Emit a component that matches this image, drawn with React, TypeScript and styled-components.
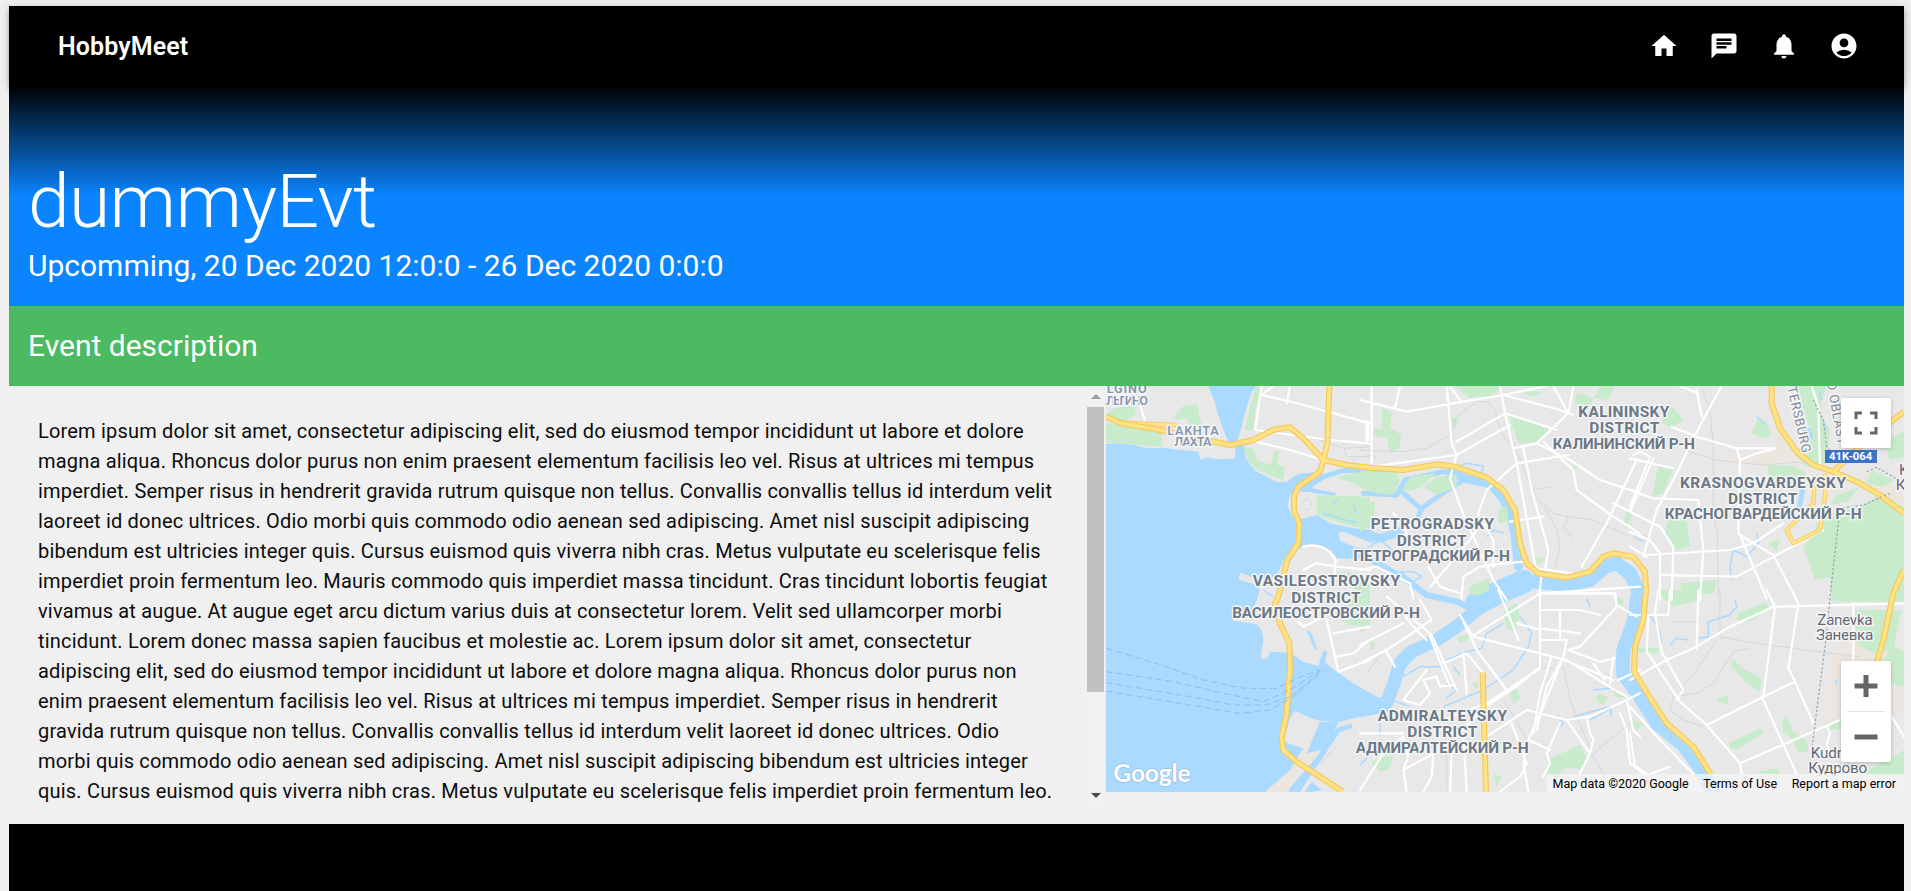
import React from 'react';
import styled, { createGlobalStyle } from 'styled-components';
import { MdHome, MdChat, MdNotifications, MdAccountCircle } from 'react-icons/md';

const GlobalStyle = createGlobalStyle`
  *, *::before, *::after { box-sizing: border-box; }
  body {
    margin: 0;
    background: #f0f0f0;
    font-family: Roboto, 'Liberation Sans', sans-serif;
    -webkit-font-smoothing: antialiased;
  }
`;

const Page = styled.div`
  height: 891px;
  padding: 6px 7px 0 9px;
  display: flex;
  flex-direction: column;
  overflow: hidden;
`;

const TopBar = styled.header`
  position: relative;
  z-index: 1;
  flex: none;
  height: 80px;
  padding: 0 45px 0 49px;
  display: flex;
  align-items: center;
  justify-content: space-between;
  background: #000;
  color: #fff;
  box-shadow: 0 2px 5px -1px rgba(0, 0, 0, 0.2), 0 5px 6px rgba(0, 0, 0, 0.14),
    0 1px 12px rgba(0, 0, 0, 0.12);
`;

const Brand = styled.div`
  font-size: 25px;
  font-weight: 600;
  letter-spacing: 0.1px;
`;

const Nav = styled.nav`
  display: flex;
  gap: 30px;
  font-size: 30px;
  svg { display: block; }
`;

const Hero = styled.section`
  position: relative;
  z-index: 2;
  flex: none;
  height: 220px;
  padding: 78px 19px 0;
  background: linear-gradient(#000, #0a84ff 110px);
  color: #fff;
`;

const Title = styled.h1`
  margin: 0;
  font-size: 75px;
  line-height: 75px;
  font-weight: 300;
  letter-spacing: -0.625px;
`;

const Schedule = styled.div`
  margin-top: 7px;
  font-size: 30px;
  line-height: 40px;
`;

const SectionBar = styled.section`
  flex: none;
  height: 80px;
  padding: 0 19px 2px;
  display: flex;
  align-items: center;
  background: #4cba61;
  color: #fff;
  font-size: 30px;
`;

const Content = styled.main`
  flex: none;
  height: 438px;
  display: flex;
  align-items: flex-start;
`;

const Description = styled.div`
  width: 1095px;
  height: 422px;
  display: flex;
  overflow: hidden;
`;

const Lines = styled.div`
  flex: 1;
  min-width: 0;
  padding: 30px 0 0 29px;
  font-size: 20px;
  line-height: 30px;
  letter-spacing: 0.185px;
  color: #0c0c0c;
`;

const Line = styled.div`
  white-space: nowrap;
`;

const ScrollTrack = styled.div`
  flex: none;
  width: 17px;
  display: flex;
  flex-direction: column;
  align-items: center;
  background: #f1f1f1;
`;

const Arrow = styled.div<{ $down?: boolean }>`
  height: 21px;
  flex: none;
  display: flex;
  align-items: center;
  &::before {
    content: '';
    border-style: solid;
    border-width: ${(p) => (p.$down ? '5px 5px 0' : '0 5px 5px')};
    border-color: ${(p) => (p.$down ? '#4c4c4c transparent' : 'transparent transparent #a0a0a0')};
  }
`;

const Thumb = styled.div`
  flex: none;
  width: 17px;
  height: 285px;
  background: #c1c1c1;
`;

const TrackSpace = styled.div`
  flex: none;
  height: 93px;
`;

const MapPanel = styled.div`
  position: relative;
  margin-left: 2px;
  flex: 1;
  height: 406px;
  overflow: hidden;
  background: #e8e8e8;
`;

const MapDrawing = styled.svg`
  display: block;
  width: 100%;
  height: 100%;
`;

const MapButton = styled.div`
  position: absolute;
  top: 12px;
  right: 13px;
  width: 50px;
  height: 50px;
  display: grid;
  place-items: center;
  background: #fff;
  border-radius: 2px;
  box-shadow: 0 1px 5px -1px rgba(0, 0, 0, 0.35);
`;

const ZoomControl = styled.div`
  position: absolute;
  top: 275px;
  right: 13px;
  width: 50px;
  height: 101px;
  display: flex;
  flex-direction: column;
  align-items: center;
  background: #fff;
  border-radius: 2px;
  box-shadow: 0 1px 5px -1px rgba(0, 0, 0, 0.35);
`;

const ZoomStep = styled.div`
  height: 50px;
  display: grid;
  place-items: center;
`;

const Divider = styled.div`
  width: 38px;
  height: 1px;
  background: #e2e2e2;
`;

const Attribution = styled.div`
  position: absolute;
  right: 0;
  bottom: 0;
  height: 18px;
  padding: 1px 8px 0 6px;
  display: flex;
  align-items: center;
  gap: 14.5px;
  background: rgba(245, 245, 245, 0.72);
  font-size: 12.5px;
  line-height: 18px;
  color: #000;
  white-space: nowrap;
`;

const Footer = styled.footer`
  flex: 1;
  background: #000;
`;

const TEXT = [
  'Lorem ipsum dolor sit amet, consectetur adipiscing elit, sed do eiusmod tempor incididunt ut labore et dolore',
  'magna aliqua. Rhoncus dolor purus non enim praesent elementum facilisis leo vel. Risus at ultrices mi tempus',
  'imperdiet. Semper risus in hendrerit gravida rutrum quisque non tellus. Convallis convallis tellus id interdum velit',
  'laoreet id donec ultrices. Odio morbi quis commodo odio aenean sed adipiscing. Amet nisl suscipit adipiscing',
  'bibendum est ultricies integer quis. Cursus euismod quis viverra nibh cras. Metus vulputate eu scelerisque felis',
  'imperdiet proin fermentum leo. Mauris commodo quis imperdiet massa tincidunt. Cras tincidunt lobortis feugiat',
  'vivamus at augue. At augue eget arcu dictum varius duis at consectetur lorem. Velit sed ullamcorper morbi',
  'tincidunt. Lorem donec massa sapien faucibus et molestie ac. Lorem ipsum dolor sit amet, consectetur',
  'adipiscing elit, sed do eiusmod tempor incididunt ut labore et dolore magna aliqua. Rhoncus dolor purus non',
  'enim praesent elementum facilisis leo vel. Risus at ultrices mi tempus imperdiet. Semper risus in hendrerit',
  'gravida rutrum quisque non tellus. Convallis convallis tellus id interdum velit laoreet id donec ultrices. Odio',
  'morbi quis commodo odio aenean sed adipiscing. Amet nisl suscipit adipiscing bibendum est ultricies integer',
  'quis. Cursus euismod quis viverra nibh cras. Metus vulputate eu scelerisque felis imperdiet proin fermentum leo.',
];

/* The map is split in six tiles, three across and two down, three units to a pixel. */
const ORIGINS = [[0, 0], [810, 0], [1620, 0], [0, 630], [810, 630], [1620, 630]];

const Tiles = ({ paths }: { paths: string[] }) => (
  <>
    {paths.map((d, i) => (
      <path key={i} d={d} transform={`translate(${ORIGINS[i][0]} ${ORIGINS[i][1]})`} />
    ))}
  </>
);

const BAY =
  'M48 192L95 190 130 195 172 205 215 203 270 210 325 215 333 240 350 232 380 237 434 236 437 200 415 185 400 150 383 100 372 60 355 18H500L485 35 465 100 452 150 442 180 444 194 460 196 468 235 495 272 560 306 588 306 625 282 690 275 672 300 640 330 600 345 593 380 607 408 632 418 680 405 720 430 790 445 850 450V490L760 455 745 458 750 482 790 500 850 510V540L740 535 725 512 690 498 640 498 620 510 590 525 572 560 560 590 510 600 450 578 445 598 490 612 510 628 500 660 485 705 425 700 430 722 500 733 515 750 520 780 512 834 530 838 540 815 600 818 640 845 685 858 700 812 712 815 705 845 725 865 790 910 860 950 895 955V995L845 1006 790 1014 750 1026 690 1022 665 1015 615 992 600 1015 580 1085 640 1105 600 1170 525 1236H48Z';

const PARKS = [
  'M48 100L75 85 140 75 135 105 110 122 70 122 48 112ZM48 130L150 140 215 160 218 200 130 194 48 188ZM250 110L280 78 320 72 330 120 345 150 300 135 290 110 265 122ZM498 18L515 22 495 90 490 150 465 150 480 80ZM460 200L490 205 500 240 545 255 550 215 568 210 562 255 585 260 580 300 500 270 475 240ZM680 345L840 350V445L790 440 680 405ZM735 292L790 280 840 268V335L790 308ZM730 575L800 580 840 600V660H820L780 610Z',
  'M285 18H425L400 45 330 55ZM65 80L95 100 92 145 125 165 118 205 90 218 80 175 38 165 45 145 65 150ZM445 105L570 145 530 185 475 190ZM10 275L110 275 120 300 100 345 50 340 0 320V290ZM150 290L225 280 180 325 125 335ZM230 290L290 285 290 320 230 345 190 320ZM0 370L45 365 40 430 0 455ZM415 385L440 380 445 425 415 430ZM325 620L390 595 385 635 335 645ZM275 110L300 120 280 150ZM520 530L555 535 540 555 520 545ZM650 38L700 55 690 80 645 70ZM725 18H762L745 60 700 55ZM625 260L655 255 640 280ZM800 395L820 400 800 445 790 430ZM480 35L550 35 520 50Z',
  'M115 65L160 120 120 145 95 125ZM385 110L410 130 425 165 400 175 365 160ZM85 260L130 265 100 340 65 350ZM115 420L170 420 180 500 130 510 105 450ZM490 18H590L565 90 600 150 590 250 530 260 490 220 550 170 520 90ZM415 255L495 258 530 285 525 330 415 285ZM520 500L600 400 690 380 740 350 822 380V660H605L600 590 555 600ZM725 270L790 300 760 320 710 310ZM620 345L690 320 650 365 600 375ZM560 430L610 425 600 480 540 490ZM415 490L450 475 440 515ZM150 610L260 600 250 640 160 650ZM760 180L822 155V230L780 240Z',
  'M740 80L790 20 840 0V110L780 105Z',
  'M430 60L470 40 480 75 465 125 440 115ZM290 145L330 125 335 140 300 160ZM335 285L350 275 355 298ZM450 310L470 295 480 325 460 345ZM570 505L660 465 680 505 660 540 620 530 590 560 550 555ZM50 505L100 495 90 535 60 545 35 520ZM400 550L425 560 410 590ZM25 155L45 160 40 185ZM710 310L745 320 730 345 710 335ZM770 20L790 30 785 50 770 50ZM325 0H370L360 15 330 12ZM755 285L800 325 765 320ZM0 120L15 110 10 135Z',
  'M85 0L215 0 210 30 130 50 90 15ZM325 70L410 35 415 55 360 95 320 90ZM305 205L345 240 395 265 390 305 350 280 305 230ZM260 325L295 315 295 345 265 335ZM295 460L390 415 400 430 330 475 300 475ZM455 395L470 375 490 425 530 450 535 485 505 490 490 450 460 430ZM610 20L780 -20H822V35H610ZM675 60H815L790 180 730 190 680 160ZM790 170L822 180V290L780 280 760 210ZM15 170L90 175 80 190 20 185ZM0 390L40 400 20 425ZM590 400L640 390 640 415 595 420ZM370 550L440 535 450 552ZM750 520L822 480V552H690Z',
];

const CANALS = [
  'M725 370L745 360M790 375L800 400M700 400L800 430',
  'M290 260L320 250 370 258 365 280 340 275M380 470L400 450 430 460M120 575L160 575 185 590 160 605ZM20 505L60 480 110 520',
  'M380 110L405 130M565 30L575 60M380 460L385 490 350 530 310 510 300 560 305 600M580 130L590 150M10 470L40 485',
  'M652 120L675 175M660 125L680 178M520 0L550 20M600 605L690 500 735 395M615 605L750 415 785 405',
  'M95 330L150 350M130 260L180 230 240 230 260 210 320 185 365 175 380 130 430 100M480 80L515 130 505 170 460 240 370 300 250 350M260 280L290 300 260 325M280 230L300 255M680 25L690 50M700 300L750 295M690 390L760 350M60 350L60 440M0 525L20 505 25 480M590 375L610 400 595 415M640 380L750 350 755 380',
  'M55 70L85 110 95 160M120 165L140 145 175 150M205 145L235 140 235 95 300 75 320 50 315 30M618 270L620 285',
];

const RAILS = [
  'M690 180L760 205 840 200M760 190L770 230 840 230M635 370Q665 340 665 380Q650 400 640 385',
  'M0 210L130 215 200 205 270 165 290 110 350 65 385 65 405 90 420 150 445 190M450 160L500 290 530 350 580 400 625 410 700 420 810 470M530 360L560 390 590 450 600 500 585 560M520 330L580 320M625 410L610 440 640 475M0 230L40 225 50 240',
  'M215 20L240 90 250 200 250 400 262 460 265 650M160 210L260 240 400 255 520 245M0 430L60 480',
  'M690 520L740 470',
  'M610 230L630 330 700 500 760 605M820 390L760 440 690 500M430 330L480 410 500 450M260 480L260 600M20 250L65 190M530 230L600 240',
  'M270 0L270 140 380 160 600 190 690 200M360 175L310 185 250 280 200 310 130 320 120 360 160 390 220 410M260 150L200 240 150 300M125 95L210 95',
];

const ROADS = [
  'M515 45L630 72 840 130M515 18L495 150 720 180 840 190M600 18L590 70M550 18L515 45M830 130V185M485 182L600 210 700 240M150 75L165 120M640 500Q700 485 730 530L740 545M640 570L680 550 740 560 840 570M735 540L735 580',
  'M0 60L140 95 310 65 430 45 560 18M260 18L275 190 290 225 270 295 320 430 340 470 400 600 440 660M35 18L35 250M120 18L105 85M420 18L435 100 470 250 530 580M430 45L600 90 640 105M580 18L625 100 530 190 460 205M640 18L625 100M300 60L270 20M435 100L290 185M450 135L290 225 0 265M435 100L590 150M530 190L630 240 720 300 840 340M490 205L515 330 565 510 555 570M470 250L625 225M470 250L380 330 355 400 345 460 280 540 210 620M550 185L640 270 650 330 760 410 840 460M665 560L740 430 830 240M760 370L840 410M450 425L550 410M305 655L310 590 360 560 440 550 490 545M370 430L400 480 400 560M540 630L545 580M540 640H765V655M0 125H25V180M100 400L130 430 150 500M530 565L640 580M0 570L50 560 150 610 160 655M205 560L240 620 300 640',
  'M275 18L195 165 130 300 80 390 40 530M125 140L200 170 320 205 435 205M320 205L330 240 325 460 370 490M330 240L380 220 430 208M200 30L215 110M150 18L205 40M0 235L130 265M10 225L30 215 60 230 0 380M70 235L0 395M0 330L70 355 205 360 220 510 210 660M0 395L90 440 130 500 125 660M0 455L60 480 90 520 90 660M50 525L300 510 370 490 460 430M370 490L430 525 500 660M330 465L410 655M430 530L580 450M430 530L320 590 95 585M545 18L565 80 570 260M0 500L50 530',
  'M710 90L745 245 840 210M730 130L840 110M740 200L790 190 840 150M625 95L640 110 690 85',
  'M0 220L80 180 215 90 180 30M0 165L130 100M75 180L105 230M130 70L160 110 200 150M80 20L215 135 290 300M210 140L270 290M300 75L340 140 460 170 600 205 760 270M310 95L350 180 440 300M335 140L540 10 840 -10M415 0L460 110 475 150M540 0V230L470 290 360 360 310 420M540 10H765L770 45 830 80M540 60H660L720 75M540 115L660 130M600 60V150M540 150H620L610 200 550 350 500 460 490 520 505 605M470 100L540 120M540 235L380 340 250 390M770 50L660 170 625 180M610 205L660 235 740 285 800 320M625 180L720 215 765 205M700 220L735 270M760 200L750 280M575 200L540 310 520 430M605 210L560 290 530 420M380 440L500 360 620 390 690 380 800 330 840 310M620 390L690 490 660 550M680 385L690 430 700 450 690 490M550 560L570 520 560 490 600 400M505 450L570 480M800 330L820 420 840 440M455 400L500 520 480 560 420 605M780 370L800 420 810 520 840 540M0 600L70 490 130 440M140 605L130 540 220 490 215 560 190 605M270 605L275 490M310 430L320 605M130 440L145 500 130 540M250 220L320 190 370 250M310 190L320 310M190 270L230 260 240 290 280 285 290 300M190 270L210 310 180 345 130 330 200 240M0 430H130M775 270L840 240',
  'M0 270L110 210 200 170 300 110 430 50 822 40M435 50L400 320 230 405M410 0L435 50M485 0L505 40 475 235 495 275 550 400M495 275L400 320M395 320L500 552M205 0L200 175M120 0L115 75 0 75M85 0L75 70 95 185 160 300 140 330M55 75L50 185 150 335 230 405 330 520 335 552M330 520L630 390M670 40V210M590 405L600 430 590 460 600 500M0 350L90 450 190 552M0 430L15 530 40 552M785 380L822 440M20 530L60 560M60 552L120 530',
];

const HIGHWAYS = [
  'M718 18L712 190 695 260 690 275 625 320 612 350 612 390 628 430 625 490 592 540 565 650 555 670 570 730 598 790 600 870 590 1000 575 1070 580 1110 620 1145 760 1236',
  'M48 110L95 130 210 150 320 175 420 195 490 180 550 150 600 142 640 175 700 240 770 255 840 263 940 270 1040 253 1095 260 1190 293 1240 330 1275 390 1290 490 1310 550 1345 580 1430 593 1500 575 1540 530 1570 520 1630 530 1665 575 1668 630 1660 720 1635 800 1632 875 1685 960 1730 1030 1810 1100 1862 1182',
  'M2045 18L2045 70 2070 145 2120 215 2170 255 2230 275 2300 305 2370 345 2442 400',
  'M2442 95L2320 190 2230 275M2442 570L2410 640 2380 780 2360 850M1178 878L1188 1236',
];

const LINKS = 'M2175 285L2170 370 2090 450 2110 490 2190 450 2205 350 2205 280M95 127L150 130 260 135';

const FERRIES =
  'M48 805L200 850 340 900 460 925 560 925 630 890 690 870M48 875L250 905 400 940 520 965 600 930 690 872M48 908L300 950 430 975 530 975 600 950 700 870M48 933L300 975 450 1000 540 990 610 950 700 872';

type LabelProps = { x: number; to: number; y: number; children: string };

const District = ({ x, to, y, children }: LabelProps) => (
  <text x={x} y={y} textLength={to - x} fontSize={46.5} fontWeight={700} fill="#6c7885">
    {children}
  </text>
);

const Suburb = ({ x, to, y, children }: LabelProps) => (
  <text x={x} y={y} textLength={to - x} fontSize={38} fontWeight={600} fill="#8796b0">
    {children}
  </text>
);

const Town = ({ x, to, y, children }: LabelProps) => (
  <text x={x} y={y} textLength={to - x} fontSize={46} fill="#626873">
    {children}
  </text>
);

const CityMap = () => (
  <MapDrawing viewBox="48 18 2394 1218" preserveAspectRatio="none" fontFamily="Roboto, sans-serif">
    <rect x="48" y="18" width="2394" height="1218" fill="#e8e8e8" />
    <path
      fill="#ebe7e0"
      d="M1905 230L2050 210 2050 100 2080 190 2140 250 2040 255 1910 250ZM2230 800L2310 740 2442 810V1000L2340 990 2200 1040ZM2290 310L2442 390V350L2330 260ZM525 1236L700 1040 740 1080 620 1236Z"
    />
    <path d={BAY} fill="#aadaff" />
    <g fill="none" stroke="#aadaff" strokeLinejoin="round" strokeLinecap="round">
      <path strokeWidth="15" d="M640 330L700 290 760 272 840 270 880 282M820 340L920 345 945 300 1060 275 1120 290 1200 312M630 325L730 340M930 330L985 380M1120 300L1050 345 995 385 985 410" />
      <path strokeWidth="26" d="M1080 277L1130 297 1200 312 1235 350 1262 400 1275 470 1285 560M810 460L870 475 930 455" />
      <path strokeWidth="18" d="M780 505L880 560 950 600 1010 645 1100 665 1150 690" />
      <path strokeWidth="40" d="M850 980L890 968 912 910 930 850 965 815 1040 780 1100 740 1160 690 1230 645" />
      <path strokeWidth="70" d="M1160 670L1220 640 1300 605" />
      <path strokeWidth="42" d="M1290 600L1430 615 1500 600 1545 560 1580 550 1620 580 1645 630 1632 720 1600 810 1598 880 1650 950 1700 1030 1780 1095 1835 1170 1870 1240" />
    </g>
    <path fill="#e8e8e8" d="M610 335L675 340 680 405 630 410 600 385ZM665 325L730 315 800 330 790 345 720 335Z" />
    <path fill="#aadaff" d="M640 1240L665 1205 695 1230ZM690 1025H740L735 1045 695 1110 650 1120Z" />
    <path fill="#aadaff" d="M2130 18L2148 30 2140 75 2128 60ZM2135 130L2175 155 2160 195 2140 175ZM2140 270L2150 300 2135 390 2120 385Z" />
    <g fill="#c8eccb"><Tiles paths={PARKS} /></g>
    <g fill="none" stroke="#aadaff" strokeWidth="4.5" strokeLinejoin="round"><Tiles paths={CANALS} /></g>
    <path
      fill="none"
      stroke="#aadaff"
      strokeWidth="14"
      d="M600 1235L690 1130 738 1025M622 1235L745 1050 785 1037"
    />
    <g fill="none" stroke="#d5d7d9" strokeWidth="3" strokeLinejoin="round"><Tiles paths={RAILS} /></g>
    <g fill="none" stroke="#fff" strokeWidth="6.5" strokeLinejoin="round" strokeLinecap="round"><Tiles paths={ROADS} /></g>
    <g fill="none" strokeLinejoin="round">
      <path d={LINKS} stroke="#f8cf68" strokeWidth="13" />
      <path d={LINKS} stroke="#ffe48d" strokeWidth="7" />
      {HIGHWAYS.map((d) => <path key={d} d={d} stroke="#f4c95f" strokeWidth="18" />)}
      {HIGHWAYS.map((d) => <path key={d} d={d} stroke="#ffe283" strokeWidth="11" />)}
      <path d={FERRIES} stroke="#92bdea" strokeWidth="3" strokeDasharray="20 10" />
      <path
        d="M2170 60L2200 120 2210 200 2230 225M2330 275L2360 262 2442 310M2400 340L2320 375 2250 385 2230 560 2205 800 2165 1110"
        stroke="#9aa0a4"
        strokeWidth="3.5"
        strokeDasharray="7 6"
      />
    </g>
    <g stroke="#f4f5f6" strokeWidth="9" strokeLinejoin="round" paintOrder="stroke">
      <Suburb x={50} to={170} y={38}>LGINO</Suburb>
      <Suburb x={48} to={174} y={75}>ЛЬГИНО</Suburb>
      <Suburb x={232} to={386} y={165}>LAKHTA</Suburb>
      <Suburb x={253} to={364} y={199}>ЛАХТА</Suburb>
      <District x={488} to={930} y={618}>VASILEOSTROVSKY</District>
      <District x={604} to={812} y={668}>DISTRICT</District>
      <District x={427} to={990} y={714}>ВАСИЛЕОСТРОВСКИЙ Р-Н</District>
      <District x={842} to={1212} y={448}>PETROGRADSKY</District>
      <District x={920} to={1130} y={498}>DISTRICT</District>
      <District x={790} to={1260} y={543}>ПЕТРОГРАДСКИЙ Р-Н</District>
      <District x={1465} to={1738} y={111}>KALININSKY</District>
      <District x={1498} to={1708} y={159}>DISTRICT</District>
      <District x={1388} to={1815} y={206}>КАЛИНИНСКИЙ Р-Н</District>
      <District x={1770} to={2268} y={323}>KRASNOGVARDEYSKY</District>
      <District x={1914} to={2122} y={372}>DISTRICT</District>
      <District x={1724} to={2315} y={418}>КРАСНОГВАРДЕЙСКИЙ Р-Н</District>
      <District x={863} to={1251} y={1023}>ADMIRALTEYSKY</District>
      <District x={952} to={1162} y={1071}>DISTRICT</District>
      <District x={797} to={1316} y={1118}>АДМИРАЛТЕЙСКИЙ Р-Н</District>
      <Town x={2182} to={2348} y={735}>Zanevka</Town>
      <Town x={2178} to={2350} y={780}>Заневка</Town>
      <Town x={2162} to={2328} y={1133}>Kudrovo</Town>
      <Town x={2155} to={2332} y={1178}>Кудрово</Town>
      <Town x={2427} to={2455} y={285}>K</Town>
      <Town x={2417} to={2444} y={330}>К</Town>
      <g fontSize="39" fill="#858a94">
        <text transform="translate(2086 -2) rotate(77)" textLength="228">ETERSBURG</text>
        <text transform="translate(2211 8) rotate(80)" textLength="190">D OBLAST</text>
      </g>
    </g>
    <rect x="2205" y="210" width="156" height="39" fill="#3c73c9" />
    <text x="2217" y="241" textLength="130" fontSize="34" fontWeight="700" fill="#fff">41K-064</text>
    <text
      x="70"
      y="1207"
      textLength="232"
      fontFamily="Lato, sans-serif"
      fontSize="74"
      fontWeight="700"
      fill="#fff"
      stroke="#8ba8bf"
      strokeWidth="4"
      strokeOpacity="0.6"
      paintOrder="stroke"
    >
      Google
    </text>
  </MapDrawing>
);

const App = () => (
  <Page>
    <GlobalStyle />
    <TopBar>
      <Brand>HobbyMeet</Brand>
      <Nav>
        <MdHome />
        <MdChat />
        <MdNotifications />
        <MdAccountCircle />
      </Nav>
    </TopBar>
    <Hero>
      <Title>dummyEvt</Title>
      <Schedule>Upcomming, 20 Dec 2020 12:0:0 - 26 Dec 2020 0:0:0</Schedule>
    </Hero>
    <SectionBar>Event description</SectionBar>
    <Content>
      <Description>
        <Lines>
          {TEXT.map((line, i) => <Line key={i}>{line}</Line>)}
        </Lines>
        <ScrollTrack>
          <Arrow />
          <Thumb />
          <TrackSpace />
          <Arrow $down />
        </ScrollTrack>
      </Description>
      <MapPanel>
        <CityMap />
        <MapButton>
          <svg width="24" height="24" viewBox="0 0 24 24" fill="none" stroke="#666" strokeWidth="3">
            <path d="M2 8V2H8M16 2H22V8M22 16V22H16M8 22H2V16" />
          </svg>
        </MapButton>
        <ZoomControl>
          <ZoomStep>
            <svg width="24" height="24" viewBox="0 0 24 24" stroke="#666" strokeWidth="5">
              <path d="M.5 12H23.5M12 1V23" />
            </svg>
          </ZoomStep>
          <Divider />
          <ZoomStep>
            <svg width="24" height="24" viewBox="0 0 24 24" stroke="#666" strokeWidth="5">
              <path d="M.5 12H23.5" />
            </svg>
          </ZoomStep>
        </ZoomControl>
        <Attribution>
          <span>Map data ©2020 Google</span>
          <span>Terms of Use</span>
          <span>Report a map error</span>
        </Attribution>
      </MapPanel>
    </Content>
    <Footer />
  </Page>
);

export default App;
